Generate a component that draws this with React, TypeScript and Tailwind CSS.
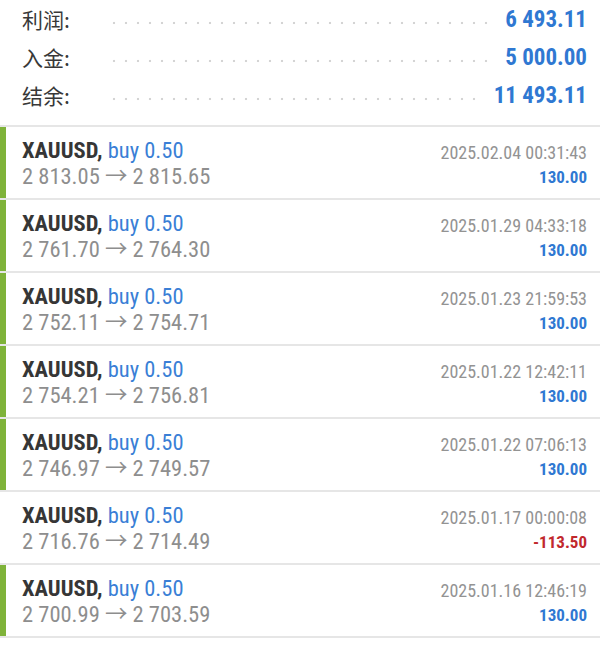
import React from 'react';

interface Deal {
  symbol: string;
  side: string;
  open: string;
  close: string;
  time: string;
  profit: string;
  loss?: boolean;
}

const summary = [
  { label: '利润:', value: '6 493.11' },
  { label: '入金:', value: '5 000.00' },
  { label: '结余:', value: '11 493.11' },
];

const deals: Deal[] = [
  { symbol: 'XAUUSD,', side: 'buy 0.50', open: '2 813.05', close: '2 815.65', time: '2025.02.04 00:31:43', profit: '130.00' },
  { symbol: 'XAUUSD,', side: 'buy 0.50', open: '2 761.70', close: '2 764.30', time: '2025.01.29 04:33:18', profit: '130.00' },
  { symbol: 'XAUUSD,', side: 'buy 0.50', open: '2 752.11', close: '2 754.71', time: '2025.01.23 21:59:53', profit: '130.00' },
  { symbol: 'XAUUSD,', side: 'buy 0.50', open: '2 754.21', close: '2 756.81', time: '2025.01.22 12:42:11', profit: '130.00' },
  { symbol: 'XAUUSD,', side: 'buy 0.50', open: '2 746.97', close: '2 749.57', time: '2025.01.22 07:06:13', profit: '130.00' },
  { symbol: 'XAUUSD,', side: 'buy 0.50', open: '2 716.76', close: '2 714.49', time: '2025.01.17 00:00:08', profit: '-113.50', loss: true },
  { symbol: 'XAUUSD,', side: 'buy 0.50', open: '2 700.99', close: '2 703.59', time: '2025.01.16 12:46:19', profit: '130.00' },
];

const DealRow: React.FC<{ deal: Deal }> = ({ deal }) => (
  <div className="flex h-[73px] border-b-2 border-[#e6e6e6]">
    <div className={`w-[6px] ${deal.loss ? 'bg-transparent' : 'bg-[#7fb33a]'}`} />
    <div className="flex flex-1 justify-between pl-[16px] pr-[13px]">
      <div className="pt-[10px] leading-[26px] text-[22.5px]">
        <div>
          <span className="font-bold text-[#363636]">{deal.symbol}</span>{' '}
          <span className="text-[#3a7fd6]">{deal.side}</span>
        </div>
        <div className="text-[#8e8e8e]">
          {deal.open} → {deal.close}
        </div>
      </div>
      <div className="pt-[13px] leading-[25px] text-right">
        <div className="text-[18px] text-[#939393]">{deal.time}</div>
        <div className={`text-[17px] font-bold ${deal.loss ? 'text-[#c1282d]' : 'text-[#2f78d2]'}`}>
          {deal.profit}
        </div>
      </div>
    </div>
  </div>
);

export default function App() {
  return (
    <div className="w-[600px] h-[651px] overflow-hidden bg-white font-['Roboto_Condensed',Roboto,'Noto_Sans_CJK_SC',sans-serif]">
      <div className="pl-[22px] pr-[13px] pb-[11px] border-b-2 border-[#e6e6e6]">
        {summary.map((row) => (
          <div key={row.label} className="flex h-[38px] items-center">
            <span className="w-[86px] pt-[2px] text-[21px] text-[#383838] font-['Noto_Sans_CJK_SC',sans-serif]">{row.label}</span>
            <div className="mt-[8px] mr-[12px] h-[4px] flex-1 bg-[radial-gradient(circle,#d4d4d4_1px,transparent_1.6px)] bg-[length:12px_4px] bg-repeat-x" />
            <span className="pt-[2px] text-[23px] font-bold text-[#2f78d2]">{row.value}</span>
          </div>
        ))}
      </div>
      {deals.map((d) => (
        <DealRow key={d.time} deal={d} />
      ))}
    </div>
  );
}
